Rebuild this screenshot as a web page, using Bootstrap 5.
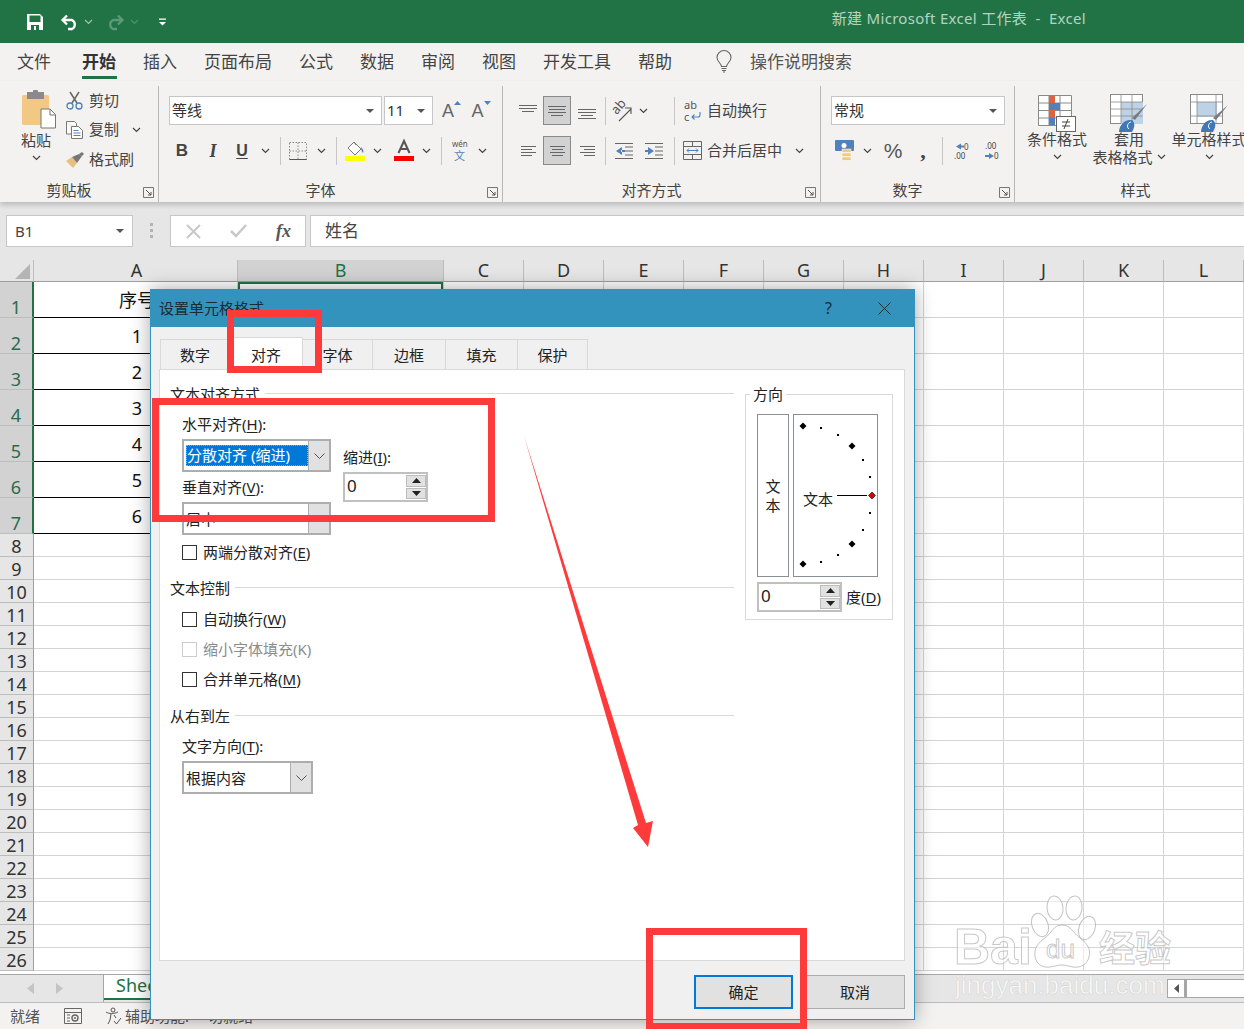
<!DOCTYPE html>
<html lang="zh-CN">
<head>
<meta charset="utf-8">
<title>新建 Microsoft Excel 工作表 - Excel</title>
<link rel="stylesheet" href="https://cdn.jsdelivr.net/npm/bootstrap@5.3.0/dist/css/bootstrap.min.css">
<style>
html,body{margin:0;padding:0}
body{width:1244px;height:1029px;overflow:hidden;position:relative;background:#fff;font-family:"Noto Sans","Noto Sans CJK SC",sans-serif;font-size:15px;line-height:20px;color:#222}
svg{display:block;flex:none;overflow:visible}
u{text-underline-offset:2px}
/* title bar */
.xl-title{height:43px;background:#217346;padding-left:27px;padding-right:158px}
.xl-title-text{color:#b4d3c2;font-size:15px;letter-spacing:.3px;padding-bottom:8px}
.qat{gap:0}
.qat-save{margin-right:18px}.qat-undo{margin-right:5px}.qat-c1{margin-right:13px}.qat-redo{margin-right:6px}.qat-c2{margin-right:20px}
/* ribbon tabs */
.xl-tabs{height:38px;background:#f3f2f1;padding-left:17px;gap:27px;color:#444;font-size:17px;line-height:38px}
.xl-tabs>.rt-file{margin-right:4px}
.rt-on{font-weight:700;position:relative;color:#333}
.rt-on::after{content:"";position:absolute;left:0;right:-1px;bottom:2px;height:3px;background:#217346}
.rt-bulb{margin-left:17px;margin-right:-9px;align-self:center}
.rt-search{color:#555}
/* ribbon */
.xl-ribbon{height:121px;background:#f3f2f1;box-shadow:0 3px 5px rgba(0,0,0,.18);position:relative;z-index:2;overflow:hidden;color:#444}
.rg{position:relative;flex:none;height:116px;margin-top:5px;padding-top:10px}
.rg::after{content:"";position:absolute;right:0;top:0;bottom:0;width:1px;background:#b9b7b5}
.rg-clip{width:159px}.rg-font{width:344px}.rg-align{width:318px}.rg-num{width:194px}.rg-style{width:242px}
.rg-style::after{display:none}
.rg-body{height:69px;padding-left:10px}
.rg-foot{position:absolute;left:0;right:1px;top:95px;display:flex;line-height:18px}
.rg-lab{flex:1;text-align:center;padding-left:0}
.rg-launch{width:20px;padding-top:6px;padding-left:5px}
.rows{display:flex;flex-direction:column;gap:11px}
.r-row{display:grid;height:29px;align-items:center;justify-items:center}
.cell-box{background:#fff;border:1px solid #c6c6c6;height:29px;display:flex;align-items:center;justify-content:space-between;padding:0 7px 0 2px;color:#333}
.cell-box span,.tl{padding-bottom:2px}
.caret{width:0;height:0;border-left:4px solid transparent;border-right:4px solid transparent;border-top:4px solid #555}
.vsep{width:1px;height:28px;background:#c8c6c4}
.f-row1{grid-template-columns:213px 2px 49px 30px 29px 20px;width:343px}
.f-row2{grid-template-columns:26px 36px 22px 24px 7px 28px 18px 13px 24px 20px 34px 10px 21px 16px 28px;width:327px}
.a-row1{grid-template-columns:30px 28px 32px 4px 30px 12px 22px 6px 30px 90px}
.a-row2{grid-template-columns:30px 28px 32px 4px 34px 26px 4px 6px 30px 75px 34px}
.n-row1{width:174px}
.n-row2{grid-template-columns:27px 18px 34px 26px 12px 26px 34px}
.a-on{width:28px;height:29px;background:#d2d2d2;border:1px solid #8a8a8a;display:flex;align-items:center;justify-content:center}
.tl{justify-self:start}
.b-b{font-family:"Liberation Sans",sans-serif;font-weight:700;font-size:17px;color:#444}
.b-i{font-family:"Liberation Serif",serif;font-style:italic;font-weight:700;font-size:18px;color:#444}
.b-u{font-family:"Liberation Sans",sans-serif;font-weight:700;font-size:16px;color:#444;text-decoration:underline;text-underline-offset:2px}
.b-pct{font-size:21px;color:#555;font-family:"Liberation Sans",sans-serif}
.b-com{font-size:22px;font-weight:700;color:#444;line-height:16px;font-family:"Liberation Serif",serif}
.a-grow{font-family:"Liberation Sans",sans-serif;font-size:18px;color:#666;font-weight:400}
/* clipboard */
.clip-wrap{display:flex;padding-left:0}
.clip-paste{width:58px;display:flex;flex-direction:column;align-items:center;padding-left:14px;margin-top:-6px}
.clip-paste>svg:first-child{margin-left:5px}
.clip-paste span{margin-top:2px;line-height:20px}
.clip-paste .chv{margin-top:5px}
.clip-list{display:flex;flex-direction:column;gap:8.5px;margin-left:8px;margin-top:-6px}
.clip-item{display:flex;align-items:center;height:21px;gap:6px}
.clip-item>span{padding-bottom:2px}
.clip-ico{width:17px;display:flex;justify-content:center}
.clip-ch{margin-left:7px}
/* styles */
.st-wrap{display:flex;margin-top:-2px}
.st-wrap.rg-body{padding-left:11px}
.st-col{display:flex;flex-direction:column;align-items:center;flex:none;line-height:18px}
.st-c1{width:62px}.st-c2{width:82px}.st-c3{width:78px}
.st-col>svg:first-child{margin-bottom:-2px}
.st-t{white-space:nowrap}
.st-ln2{display:flex;align-items:center;gap:4px;white-space:nowrap}
.st-col .chv{margin-top:6px}
/* formula */
.xl-formula{height:58px;background:#e6e6e6;padding:13px 0 0 6px}
.fx-box{height:32px;background:#fff;border:1px solid #c6c6c6;display:flex;align-items:center;color:#444}
.fx-name{width:127px;padding:0 8px;justify-content:space-between;font-size:15px}
.fx-dots{width:37px;display:flex;flex-direction:column;align-items:center;gap:3px}
.fx-dots i{width:3px;height:3px;background:#b3b3b3;display:block}
.fx-btns{width:136px;padding:0 14px 0 15px;justify-content:space-between}
.fx-input{margin-left:4px;flex:1;padding-left:14px;font-size:17px;border-right:0}
.fx-fx{font-family:"Liberation Serif",serif;font-style:italic;font-weight:700;font-size:18px;color:#555}
/* sheet */
.xl-sheet{height:714px;overflow:hidden;background:#fff}
.grid-tb{table-layout:fixed;width:1244px;border-collapse:separate;border-spacing:0;font-size:18px;color:#111}
.c-h{width:34px}.c-a{width:204px}.c-b{width:206px}.c-n{width:80px}
.grid-tb td,.grid-tb th{padding:0;border-right:1px solid #d4d4d4;border-bottom:1px solid #d4d4d4;font-weight:400;text-align:center;overflow:hidden;white-space:nowrap}
.grid-tb thead th{height:22px;line-height:21px;background:#e6e6e6;border-right:1px solid #bdbdbd;border-bottom:1px solid #9e9e9e;color:#333;vertical-align:middle}
.grid-tb thead th.col-on{background:#d2d2d2;color:#217346}
.grid-tb thead th.corner{position:relative}
.corner-tri{width:0;height:0;border-left:15px solid transparent;border-bottom:15px solid #b4b4b4;margin:2px 0 0 15px}
.grid-tb tbody th{background:#e6e6e6;border-right:1px solid #9e9e9e;border-bottom:1px solid #bdbdbd;line-height:20px;vertical-align:bottom;color:#333}
.grid-tb tbody tr.r-tall{height:36px}
.grid-tb tbody tr.r-sm{height:23px}
.grid-tb tbody tr.r-tall th{background:#d2d2d2;color:#2a6b4d;border-right:2px solid #217346}
.grid-tb tbody tr.r-tall td.bk{border-bottom:1px solid #000}
.grid-tb tbody tr.r-tall td.col1{padding-left:3px}
.grid-tb thead th.col1{padding-left:2px}
.grid-tb td.sel-cell{box-shadow:inset 0 0 0 2px #217346}
/* sheet tabs */
.xl-sbar{height:29px;background:#e6e6e6;border-top:1px solid #a6a6a6;border-bottom:1px solid #bdbdbd;position:relative}
.sb-nav{width:104px;padding-left:27px;gap:22px;border-right:1px solid #a6a6a6}
.sb-tab{width:120px;background:#fff;color:#217346;font-size:18px;padding-left:12px;line-height:21px;border-bottom:2px solid #217346;height:25px}
.sb-scroll{position:absolute;right:0;top:4px;width:77px;height:19px;display:flex;background:#fff;border:1px solid #a6a6a6;border-right:0}
.sb-arrow{width:19px;border-right:3px solid #a6a6a6;display:flex;align-items:center;justify-content:center}
/* status */
.xl-status{height:26px;background:#f3f2f1;padding-left:10px;color:#555;font-size:15px}
.st-gap1{margin-left:24px}.st-gap2{margin-left:23px;margin-right:3px}
/* dialog */
.xl-dialog{position:absolute;left:150px;top:289px;width:765px;height:731px;background:#f0f0f0;border:1px solid #3393bd;box-shadow:0 0 18px rgba(0,0,0,.35);z-index:5;display:flex;flex-direction:column}
.dlg-head{height:37px;background:#3393bd;padding:0 23px 0 8px;flex:none;font-size:15px;color:#1c2b33}
.dlg-head>span{padding-bottom:2px}
.dlg-q{margin-right:46px;font-size:16px;padding-bottom:2px}
.dlg-nav.nav{display:grid;grid-template-columns:70px 73px 70px 73px 72px 70px;width:428px;margin:12px 0 0 9px;padding:0;border:0;height:30px;flex:none}
.dlg-nav .dlg-tab{display:block;border:1px solid #d9d9d9;border-left:0;border-bottom:0;background:#f0f0f0;color:#222;text-align:center;line-height:28px;padding:1px 0 0;font-size:15px;height:30px;text-decoration:none}
.dlg-nav .dlg-tab.first{border-left:1px solid #d9d9d9}
.dlg-nav .dlg-tab.active{background:#fff;margin-top:-2px;height:33px;position:relative;z-index:2;padding-top:3px}
.dlg-panel{width:746px;height:592px;margin-left:8px;background:#fff;border:1px solid #d9d9d9;flex:none;padding:14px 0 0 0;display:flex}
.dp-left{width:574px;flex:none;padding-left:10px}
.dp-head{display:flex;align-items:center;gap:5px;height:20px}
.dp-head>span{padding-bottom:1px}
.dp-head i{flex:1;height:1px;background:#d9d9d9;display:block;margin-top:-2px}
.dp-ind{padding-left:12px}
.dp-head.h-mid{margin-top:16px}
.dp-head.h-b{margin-top:17px}
.lb-h{margin-top:10px;height:20px}
.sel-box{height:33px;border:2px solid #adadad;border-right-width:2px;background:#fff;display:flex;margin-top:5px;width:149px;padding-left:0;overflow:hidden}
.sel-box.sb-dir{width:131px;margin-top:5px}
.sel-txt{flex:1;display:flex;align-items:center;padding-left:2px;min-width:0;white-space:nowrap}
.sel-pick{background:#0078d7;color:#fff;height:21px;line-height:20px;outline:1px dotted #e09a40;outline-offset:-1px;width:124px;padding-left:1px;white-space:nowrap;overflow:hidden}
.sel-btn{width:21px;flex:none;background:#e1e1e1;border-left:1px solid #adadad;display:flex;align-items:center;justify-content:center}
.lb-v{margin-top:5px;height:20px}
.two-col{display:flex}
.tc-l{width:149px;flex:none;margin-right:12px}
.tc-r{padding-top:43px}
.spin{width:85px;height:30px;border:2px solid #c0c0c0;background:#fff;display:flex;margin-top:5px;font-size:15px}
.spin-val{flex:1;padding-left:2px;line-height:24px;font-size:17px}
.spin-btns{width:20px;display:flex;flex-direction:column;margin:1px 0 1px 1px;gap:1px}
.spin-btns i{flex:1;background:#e1e1e1;border:1px solid #bdbdbd;display:flex;align-items:center;justify-content:center}
.chk-row{display:flex;align-items:center;gap:6px;height:20px;margin-top:10px;white-space:nowrap}
.chk-row.c-first{margin-top:7px}
.chk-row.c-sec{margin-top:11px}
.chk-row .form-check-input{width:15px;height:15px;margin:0;border:1px solid #333;border-radius:0;flex:none;opacity:1}
.chk-row .form-check-input:disabled{border-color:#ccc;opacity:1}
.chk-off{color:#8c8c8c}
.lb-dir{margin-top:10px;height:20px}
.dp-right{width:148px;height:226px;border:1px solid #d9d9d9;margin:10px 0 0 11px;position:relative;padding:19px 0 0 11px;flex:none}
.dp-leg{position:absolute;left:4px;top:-11px;background:#fff;padding:0 3px;line-height:20px}
.or-boxes{display:flex;gap:4px}
.or-vert{width:32px;height:163px;border:1px solid #8a8f94;display:flex;flex-direction:column;align-items:center;justify-content:center;line-height:19px}
.or-dial{width:85px;height:163px;border:1px solid #8a8f94}
.or-foot{display:flex;align-items:center;gap:4px;margin-top:5px}
.or-foot .spin{margin:0}
.or-foot>span{margin-top:0}
.dlg-foot{gap:12px;padding:14px 9px 0 0;flex:none}
.dlg-foot .btn{width:100px;height:34px;padding:0;background:#e1e1e1;border:1px solid #adadad;border-radius:0;color:#222;font-size:15px;line-height:30px}
.dlg-foot .btn.dlg-ok{width:99px;border:2px solid #0078d7}
/* annotations */
.mark-box{position:absolute;border:7px solid #fe3a3a;z-index:6}
.mb-1{left:227px;top:310px;width:95px;height:63px}
.mb-2{left:152px;top:398px;width:343px;height:124px}
.mb-3{left:646px;top:928px;width:161px;height:102px}
.mark-arrow{position:absolute;left:0;top:0;z-index:7;pointer-events:none}
.wm-paw{position:absolute;left:0;top:0;z-index:8;pointer-events:none}
.wm-t{fill:rgba(255,255,255,.55);stroke:rgba(170,170,170,.65);stroke-width:1;font-family:"Liberation Sans",sans-serif}
.wm-cn{font-family:"Noto Sans CJK SC",sans-serif;font-weight:700;font-size:36px}
.wm-sm{fill:rgba(255,255,255,.75);stroke:rgba(190,190,190,.5);stroke-width:.6;font-size:26px}
</style>
</head>
<body>
<svg width="0" height="0" class="position-absolute">
<symbol id="chv" viewBox="0 0 9 6"><path d="M1 1l3.5 3.5L8 1" fill="none" stroke="#444" stroke-width="1.2"/></symbol>
<symbol id="launch" viewBox="0 0 11 11"><path d="M.5 10.5V.5h10v10z" fill="none" stroke="#777"/><path d="M3 3l5 5M8 5v3H5" fill="none" stroke="#555"/></symbol>
</svg>

<div class="xl-title d-flex align-items-center justify-content-between">
  <div class="d-flex align-items-center qat">
    <svg class="qat-save" width="16" height="16" viewBox="0 0 16 16"><path d="M0 0h13l3 3v13H0z" fill="#fff"/><rect x="2.500" y="1.500" width="11" height="6.500" fill="#217346"/><rect x="4" y="11" width="8" height="5" fill="#217346"/><rect x="7" y="12" width="2" height="4" fill="#fff"/></svg>
    <svg class="qat-undo" width="18" height="16" viewBox="0 0 18 16"><path d="M2 6h9a5 5 0 0 1 0 9H7M6 1.500L1.500 6 6 10.500" fill="none" stroke="#fff" stroke-width="2.300"/></svg>
    <svg class="qat-c1" width="9" height="6" viewBox="0 0 9 6"><path d="M1 1l3.500 3.500L8 1" fill="none" stroke="#9ec5ae" stroke-width="1.200"/></svg>
    <svg class="qat-redo" width="18" height="16" viewBox="0 0 18 16"><path d="M16 6H7a5 5 0 0 0 0 9h4M12 1.500L16.500 6 12 10.500" fill="none" stroke="#5a9a78" stroke-width="2.300"/></svg>
    <svg class="qat-c2" width="9" height="6" viewBox="0 0 9 6"><path d="M1 1l3.500 3.500L8 1" fill="none" stroke="#4f9270" stroke-width="1.200"/></svg>
    <svg width="7" height="8" viewBox="0 0 7 8"><path d="M0 .5h7v1.200H0zM0 4h7L3.500 7.500z" fill="#fff"/></svg>
  </div>
  <div class="xl-title-text">新建 Microsoft Excel 工作表&nbsp; -&nbsp; Excel</div>
</div>

<div class="xl-tabs d-flex">
  <span class="rt-file">文件</span><span class="rt-on">开始</span><span>插入</span><span>页面布局</span><span>公式</span><span>数据</span><span>审阅</span><span>视图</span><span>开发工具</span><span>帮助</span>
  <svg class="rt-bulb" width="16" height="22" viewBox="0 0 16 22"><path d="M5.500 15.500C5 12 1 10.500 1 6.500a7 7 0 0 1 14 0c0 4-4 5.500-4.500 9z" fill="none" stroke="#666" stroke-width="1.100"/><path d="M5.500 17.500h5M6 19.500h4M7 21h2" stroke="#666"/></svg>
  <span class="rt-search">操作说明搜索</span>
</div>

<div class="xl-ribbon d-flex">
  <!-- clipboard -->
  <div class="rg rg-clip">
    <div class="clip-wrap">
      <div class="clip-paste">
        <svg width="36" height="38" viewBox="0 0 36 38"><rect x="1" y="5" width="27" height="30" rx="1.500" fill="#f1c985"/><rect x="6" y="2" width="17" height="7" fill="#8a8a8a"/><rect x="12" y="0" width="5" height="4" rx="1" fill="#8a8a8a"/><path d="M20 19h9l5.500 5.500V38H20z" fill="#fff" stroke="#777"/><path d="M29 19v6h5.500" fill="none" stroke="#777"/></svg>
        <span>粘贴</span>
        <svg class="chv" width="9" height="6"><use href="#chv"/></svg>
      </div>
      <div class="clip-list">
        <div class="clip-item"><div class="clip-ico"><svg width="17" height="19" viewBox="0 0 17 19"><path d="M4 1l7 11M13 1L6 12" fill="none" stroke="#666" stroke-width="1.500"/><circle cx="4" cy="15" r="3" fill="none" stroke="#4f81bd" stroke-width="1.300"/><circle cx="13" cy="15" r="3" fill="none" stroke="#4f81bd" stroke-width="1.300"/></svg></div><span>剪切</span></div>
        <div class="clip-item"><div class="clip-ico"><svg width="17" height="18" viewBox="0 0 17 18"><path d="M.5.500h8l2 2V5M.5.500V13H5" fill="#fff" stroke="#777"/><path d="M5.500 5.500h7l4 4v8h-11z" fill="#fff" stroke="#777"/><path d="M7.500 9.500h5M7.500 12h7M7.500 14.500h7" stroke="#4f81bd"/></svg></div><span>复制</span><svg class="clip-ch" width="9" height="6"><use href="#chv"/></svg></div>
        <div class="clip-item"><div class="clip-ico"><svg width="18" height="16" viewBox="0 0 18 16"><path d="M0 9l6-4 5 6-4 5z" fill="#e8bf7e"/><path d="M6 5l7-3 3 2-5 7z" fill="#777"/><path d="M13 2l3-2 2 2-2 2z" fill="#777"/></svg></div><span>格式刷</span></div>
      </div>
    </div>
    <div class="rg-foot"><span class="rg-lab">剪贴板</span><span class="rg-launch"><svg width="11" height="11"><use href="#launch"/></svg></span></div>
  </div>
  <!-- font -->
  <div class="rg rg-font">
    <div class="rg-body rows">
      <div class="r-row f-row1">
        <div class="cell-box w-100"><span>等线</span><i class="caret"></i></div><span></span>
        <div class="cell-box w-100"><span>11</span><i class="caret"></i></div>
        <span class="a-grow position-relative">A<svg class="position-absolute top-0 start-100" width="7" height="4" viewBox="0 0 7 4"><path d="M0 4l3.500-4L7 4z" fill="#4f81bd"/></svg></span>
        <span class="a-grow position-relative">A<svg class="position-absolute top-0 start-100" width="7" height="4" viewBox="0 0 7 4"><path d="M0 0l3.500 4L7 0z" fill="#4f81bd"/></svg></span>
        <span></span>
      </div>
      <div class="r-row f-row2">
        <span class="b-b">B</span><span class="b-i">I</span><span class="b-u">U</span><svg width="9" height="6"><use href="#chv"/></svg>
        <i class="vsep"></i>
        <svg width="18" height="18" viewBox="0 0 18 18"><path d="M.5.500h17v17H.5zM.5 9h17M9 .500v17" fill="none" stroke="#8a8a8a" stroke-dasharray="1.500 1.500"/><path d="M.5 17.500h17" stroke="#555"/></svg><svg width="9" height="6"><use href="#chv"/></svg>
        <i class="vsep"></i>
        <svg width="20" height="20" viewBox="0 0 20 20"><path d="M9 1l7 7-6 6-7-7z" fill="#fff" stroke="#777"/><path d="M6 4l3-3 2 3" fill="none" stroke="#777"/><path d="M16 6c2 2 3 4 2 6-1-1-2-3-2-6z" fill="#4f81bd"/><rect y="15" width="20" height="5" fill="#ffff00"/></svg><svg width="9" height="6"><use href="#chv"/></svg>
        <svg width="20" height="21" viewBox="0 0 20 21"><path d="M4.500 13L10 1l5.500 12M6.500 9h7" fill="none" stroke="#555" stroke-width="2"/><rect y="16" width="20" height="5" fill="#ff0000"/></svg><svg width="9" height="6"><use href="#chv"/></svg>
        <i class="vsep"></i>
        <svg width="18" height="22" viewBox="0 0 18 22"><text x="1" y="7" font-size="8" fill="#555" font-family="Noto Sans">wén</text><text x="3" y="20" font-size="11" fill="#4f81bd" font-family="Noto Sans CJK SC">文</text></svg><svg width="9" height="6"><use href="#chv"/></svg>
      </div>
    </div>
    <div class="rg-foot"><span class="rg-lab">字体</span><span class="rg-launch"><svg width="11" height="11"><use href="#launch"/></svg></span></div>
  </div>
  <!-- align -->
  <div class="rg rg-align">
    <div class="rg-body rows">
      <div class="r-row a-row1">
        <svg width="18" height="18" viewBox="0 0 18 18"><path d="M0 3.500h18M0 6.500h18M3 9.500h12" stroke="#666"/></svg>
        <div class="a-on"><svg width="18" height="12" viewBox="0 0 18 12"><path d="M0 1.500h18M1 4.500h16M0 7.500h18M3 10.500h12" stroke="#666"/></svg></div>
        <svg width="18" height="18" viewBox="0 0 18 18"><path d="M0 7.500h18M0 10.500h18M3 13.500h12M0 16.500h18" stroke="#666"/></svg>
        <i class="vsep"></i>
        <svg width="22" height="24" viewBox="0 0 22 24"><text x="1" y="12" transform="rotate(-50 8 9)" font-size="13" fill="#555" font-family="Noto Sans">ab</text><path d="M8 22L20 10M14 9h6v6" fill="none" stroke="#555" stroke-width="1.100"/></svg>
        <svg width="9" height="6"><use href="#chv"/></svg><span></span>
        <i class="vsep"></i>
        <svg width="17" height="22" viewBox="0 0 17 22"><text x="0" y="9" font-size="11" fill="#555" font-family="Noto Sans">ab</text><text x="0" y="21" font-size="11" fill="#555" font-family="Noto Sans">c</text><path d="M16 12v3a2 2 0 0 1-2 2H8M10.500 14.500L8 17l2.500 2.500" fill="none" stroke="#4f81bd" stroke-width="1.100"/></svg>
        <span class="tl text-nowrap">自动换行</span>
      </div>
      <div class="r-row a-row2">
        <svg width="15" height="12" viewBox="0 0 15 12"><path d="M0 1.500h15M0 4.500h11M0 7.500h15M0 10.500h11" stroke="#666"/></svg>
        <div class="a-on"><svg width="15" height="12" viewBox="0 0 15 12"><path d="M0 1.500h15M2 4.500h11M0 7.500h15M2 10.500h11" stroke="#666"/></svg></div>
        <svg width="15" height="12" viewBox="0 0 15 12"><path d="M0 1.500h15M4 4.500h11M0 7.500h15M4 10.500h11" stroke="#666"/></svg>
        <i class="vsep"></i>
        <svg width="18" height="16" viewBox="0 0 18 16"><path d="M0 .5h18M10 4h8M10 8h8M10 12h8M0 15.500h18" stroke="#666"/><path d="M7 4L1 8l6 4zM6 7h4v2H6z" fill="#4f81bd"/></svg>
        <svg width="18" height="16" viewBox="0 0 18 16"><path d="M0 .5h18M10 4h8M10 8h8M10 12h8M0 15.500h18" stroke="#666"/><path d="M3 4l6 4-6 4zM0 7h4v2H0z" fill="#4f81bd"/></svg>
        <span></span>
        <i class="vsep"></i>
        <svg width="19" height="19" viewBox="0 0 19 19"><path d="M.5.500h18v18H.5zM.5 5.500h18M.5 13.500h18M9.500.500v5M9.500 13.500v5" fill="none" stroke="#666"/><path d="M4 9.500h11M6 7.500l-2 2 2 2M13 7.500l2 2-2 2" fill="none" stroke="#4f81bd"/></svg>
        <span class="tl text-nowrap">合并后居中</span>
        <svg width="9" height="6"><use href="#chv"/></svg>
      </div>
    </div>
    <div class="rg-foot"><span class="rg-lab">对齐方式</span><span class="rg-launch"><svg width="11" height="11"><use href="#launch"/></svg></span></div>
  </div>
  <!-- number -->
  <div class="rg rg-num">
    <div class="rg-body rows">
      <div class="r-row n-row1"><div class="cell-box w-100"><span>常规</span><i class="caret"></i></div></div>
      <div class="r-row n-row2">
        <svg width="20" height="21" viewBox="0 0 20 21"><rect x="0" y="0" width="19" height="11" rx="1" fill="#4f81bd"/><circle cx="9" cy="5.500" r="2.500" fill="#fff"/><g fill="#f1c985" stroke="#fff" stroke-width=".5"><rect x="7" y="9" width="9" height="3.500"/><rect x="7" y="13" width="9" height="3.500"/><rect x="7" y="17" width="9" height="3.500"/></g></svg>
        <svg width="9" height="6"><use href="#chv"/></svg>
        <span class="b-pct">%</span>
        <span class="b-com">,</span>
        <i class="vsep"></i>
        <svg width="16" height="18" viewBox="0 0 16 18"><path d="M8 1.500L3 4.500l5 3V5.500h3v-2H8z" fill="#4f81bd"/><text x="11" y="8" font-size="8" fill="#444" font-family="Noto Sans">0</text><text x="1" y="17" font-size="8" fill="#444" font-family="Noto Sans">.00</text></svg>
        <svg width="16" height="18" viewBox="0 0 16 18"><text x="2" y="7" font-size="8" fill="#444" font-family="Noto Sans">.00</text><path d="M6 11l5 3-5 3v-2H2v-2h4z" fill="#4f81bd"/><text x="11" y="17" font-size="8" fill="#444" font-family="Noto Sans">0</text></svg>
      </div>
    </div>
    <div class="rg-foot"><span class="rg-lab">数字</span><span class="rg-launch"><svg width="11" height="11"><use href="#launch"/></svg></span></div>
  </div>
  <!-- styles -->
  <div class="rg rg-style">
    <div class="st-wrap rg-body">
      <div class="st-col st-c1">
        <svg width="38" height="38" viewBox="0 0 38 38"><path d="M.5 1.500h33v30H.5zM.5 9h33M.5 16.500h33M.5 24h33M11 1.500v30M22 1.500v30" fill="#fff" stroke="#8a8a8a"/><rect x="11" y="2" width="6" height="7" fill="#e0623f"/><rect x="11" y="9" width="11" height="7" fill="#4f81bd"/><rect x="11" y="16" width="6" height="8" fill="#e0623f"/><rect x="11" y="24" width="6" height="7" fill="#4f81bd"/><rect x="18.500" y="22.500" width="19" height="15" fill="#fff" stroke="#666"/><path d="M24 28h8M24 32h8M30 25l-4 10" stroke="#444"/></svg>
        <span class="st-t">条件格式</span>
        <svg class="chv" width="9" height="6"><use href="#chv"/></svg>
      </div>
      <div class="st-col st-c2">
        <svg width="38" height="38" viewBox="0 0 38 38"><rect x=".5" y=".5" width="32" height="29" fill="#fff" stroke="#8a8a8a"/><rect x="11" y="8" width="22" height="22" fill="#bdd2e6"/><path d="M.5 8h32M.5 15h32M.5 22h32M11 .500v29M22 .500v29" fill="none" stroke="#8a8a8a" stroke-width=".8"/><path d="M37 10l-12 16-3-2z" fill="#7a7a7a"/><path d="M9 38c0-6 5-13 13-12 4 4 2 8 0 12z" fill="#3f78b5"/><path d="M19 35c-3-2-1-7 2-7" stroke="#fff" fill="none"/></svg>
        <span class="st-t">套用</span>
        <span class="st-ln2">表格格式<svg width="9" height="6"><use href="#chv"/></svg></span>
      </div>
      <div class="st-col st-c3">
        <svg width="39" height="38" viewBox="0 0 39 38"><rect x=".5" y=".5" width="32" height="29" fill="#fff" stroke="#8a8a8a"/><rect x="7" y="8" width="20" height="15" fill="#bdd2e6"/><path d="M.5 8h32M.5 22h32M7 .500v29M26 .500v29" fill="none" stroke="#8a8a8a" stroke-width=".8"/><path d="M38 11l-12 15-3-2z" fill="#7a7a7a"/><path d="M11 38c0-6 5-13 12-12 4 4 2 8 0 12z" fill="#3f78b5"/><path d="M20 35c-3-2-1-7 2-7" stroke="#fff" fill="none"/></svg>
        <span class="st-t">单元格样式</span>
        <svg class="chv" width="9" height="6"><use href="#chv"/></svg>
      </div>
    </div>
    <div class="rg-foot"><span class="rg-lab">样式</span></div>
  </div>
</div>

<div class="xl-formula d-flex align-items-start">
  <div class="fx-box fx-name"><span>B1</span><i class="caret"></i></div>
  <div class="fx-dots h-100 pt-2"><i></i><i></i><i></i></div>
  <div class="fx-box fx-btns">
    <svg width="15" height="15" viewBox="0 0 15 15"><path d="M1 1l13 13M14 1L1 14" stroke="#c8c8c8" stroke-width="2"/></svg>
    <svg width="17" height="14" viewBox="0 0 17 14"><path d="M1 7l5 5L16 1" fill="none" stroke="#c8c8c8" stroke-width="2.500"/></svg>
    <span class="fx-fx">fx</span>
  </div>
  <div class="fx-box fx-input">姓名</div>
</div>

<div class="xl-sheet">
<table class="grid-tb">
<colgroup><col class="c-h"><col class="c-a"><col class="c-b"><col class="c-n"><col class="c-n"><col class="c-n"><col class="c-n"><col class="c-n"><col class="c-n"><col class="c-n"><col class="c-n"><col class="c-n"><col class="c-n"></colgroup>
<thead><tr><th class="corner"><div class="corner-tri"></div></th><th class="col1">A</th><th class="col-on">B</th><th>C</th><th>D</th><th>E</th><th>F</th><th>G</th><th>H</th><th>I</th><th>J</th><th>K</th><th>L</th></tr></thead>
<tbody>
<tr class="r-tall"><th>1</th><td class="bk col1">序号</td><td class="bk sel-cell"></td><td></td><td></td><td></td><td></td><td></td><td></td><td></td><td></td><td></td><td></td></tr>
<tr class="r-tall"><th>2</th><td class="bk col1">1</td><td class="bk"></td><td></td><td></td><td></td><td></td><td></td><td></td><td></td><td></td><td></td><td></td></tr>
<tr class="r-tall"><th>3</th><td class="bk col1">2</td><td class="bk"></td><td></td><td></td><td></td><td></td><td></td><td></td><td></td><td></td><td></td><td></td></tr>
<tr class="r-tall"><th>4</th><td class="bk col1">3</td><td class="bk"></td><td></td><td></td><td></td><td></td><td></td><td></td><td></td><td></td><td></td><td></td></tr>
<tr class="r-tall"><th>5</th><td class="bk col1">4</td><td class="bk"></td><td></td><td></td><td></td><td></td><td></td><td></td><td></td><td></td><td></td><td></td></tr>
<tr class="r-tall"><th>6</th><td class="bk col1">5</td><td class="bk"></td><td></td><td></td><td></td><td></td><td></td><td></td><td></td><td></td><td></td><td></td></tr>
<tr class="r-tall"><th>7</th><td class="bk col1">6</td><td class="bk"></td><td></td><td></td><td></td><td></td><td></td><td></td><td></td><td></td><td></td><td></td></tr>
<tr class="r-sm"><th>8</th><td></td><td></td><td></td><td></td><td></td><td></td><td></td><td></td><td></td><td></td><td></td><td></td></tr>
<tr class="r-sm"><th>9</th><td></td><td></td><td></td><td></td><td></td><td></td><td></td><td></td><td></td><td></td><td></td><td></td></tr>
<tr class="r-sm"><th>10</th><td></td><td></td><td></td><td></td><td></td><td></td><td></td><td></td><td></td><td></td><td></td><td></td></tr>
<tr class="r-sm"><th>11</th><td></td><td></td><td></td><td></td><td></td><td></td><td></td><td></td><td></td><td></td><td></td><td></td></tr>
<tr class="r-sm"><th>12</th><td></td><td></td><td></td><td></td><td></td><td></td><td></td><td></td><td></td><td></td><td></td><td></td></tr>
<tr class="r-sm"><th>13</th><td></td><td></td><td></td><td></td><td></td><td></td><td></td><td></td><td></td><td></td><td></td><td></td></tr>
<tr class="r-sm"><th>14</th><td></td><td></td><td></td><td></td><td></td><td></td><td></td><td></td><td></td><td></td><td></td><td></td></tr>
<tr class="r-sm"><th>15</th><td></td><td></td><td></td><td></td><td></td><td></td><td></td><td></td><td></td><td></td><td></td><td></td></tr>
<tr class="r-sm"><th>16</th><td></td><td></td><td></td><td></td><td></td><td></td><td></td><td></td><td></td><td></td><td></td><td></td></tr>
<tr class="r-sm"><th>17</th><td></td><td></td><td></td><td></td><td></td><td></td><td></td><td></td><td></td><td></td><td></td><td></td></tr>
<tr class="r-sm"><th>18</th><td></td><td></td><td></td><td></td><td></td><td></td><td></td><td></td><td></td><td></td><td></td><td></td></tr>
<tr class="r-sm"><th>19</th><td></td><td></td><td></td><td></td><td></td><td></td><td></td><td></td><td></td><td></td><td></td><td></td></tr>
<tr class="r-sm"><th>20</th><td></td><td></td><td></td><td></td><td></td><td></td><td></td><td></td><td></td><td></td><td></td><td></td></tr>
<tr class="r-sm"><th>21</th><td></td><td></td><td></td><td></td><td></td><td></td><td></td><td></td><td></td><td></td><td></td><td></td></tr>
<tr class="r-sm"><th>22</th><td></td><td></td><td></td><td></td><td></td><td></td><td></td><td></td><td></td><td></td><td></td><td></td></tr>
<tr class="r-sm"><th>23</th><td></td><td></td><td></td><td></td><td></td><td></td><td></td><td></td><td></td><td></td><td></td><td></td></tr>
<tr class="r-sm"><th>24</th><td></td><td></td><td></td><td></td><td></td><td></td><td></td><td></td><td></td><td></td><td></td><td></td></tr>
<tr class="r-sm"><th>25</th><td></td><td></td><td></td><td></td><td></td><td></td><td></td><td></td><td></td><td></td><td></td><td></td></tr>
<tr class="r-sm"><th>26</th><td></td><td></td><td></td><td></td><td></td><td></td><td></td><td></td><td></td><td></td><td></td><td></td></tr>
</tbody>
</table>
</div>

<div class="xl-sbar d-flex">
  <div class="sb-nav d-flex align-items-center">
    <svg width="7" height="11" viewBox="0 0 7 11"><path d="M7 0v11L0 5.500z" fill="#c4c4c4"/></svg>
    <svg width="7" height="11" viewBox="0 0 7 11"><path d="M0 0v11l7-5.500z" fill="#c4c4c4"/></svg>
  </div>
  <div class="sb-tab">Sheet1</div>
  <div class="sb-scroll"><div class="sb-arrow"><svg width="5" height="9" viewBox="0 0 5 9"><path d="M5 0v9L0 4.500z" fill="#555"/></svg></div></div>
</div>

<div class="xl-status d-flex align-items-center">
  <span>就绪</span>
  <svg class="st-gap1" width="18" height="16" viewBox="0 0 18 16"><path d="M.5.500h17v15H.5zM.5 4.500h17M3 7h3M3 10h3M3 13h3" fill="none" stroke="#666"/><circle cx="11" cy="10" r="3" fill="none" stroke="#666" stroke-width="1.400"/><circle cx="11" cy="10" r="1" fill="#666"/></svg>
  <svg class="st-gap2" width="17" height="18" viewBox="0 0 17 18"><circle cx="8" cy="3" r="2" fill="none" stroke="#555"/><path d="M1 5c3 2 8 2 12 0M6 7l-1 6-2 4M9 8l2 3M9 14l2.500 3L16 11" fill="none" stroke="#555"/></svg>
  <span>辅助功能: 一切就绪</span>
</div>

<div class="xl-dialog">
  <div class="dlg-head d-flex align-items-center justify-content-between">
    <span>设置单元格格式</span>
    <div class="d-flex align-items-center"><span class="dlg-q">?</span><svg width="13" height="13" viewBox="0 0 13 13"><path d="M.5.500l12 12M12.500.500l-12 12" stroke="#1c2b33"/></svg></div>
  </div>
  <nav class="nav dlg-nav">
    <a class="dlg-tab first" href="#">数字</a>
    <a class="dlg-tab active" href="#">对齐</a>
    <a class="dlg-tab" href="#">字体</a>
    <a class="dlg-tab" href="#">边框</a>
    <a class="dlg-tab" href="#">填充</a>
    <a class="dlg-tab" href="#">保护</a>
  </nav>
  <div class="dlg-panel">
    <div class="dp-left">
      <div class="dp-head"><span>文本对齐方式</span><i></i></div>
      <div class="dp-ind">
        <div class="two-col">
          <div class="tc-l">
            <div class="lb-h text-nowrap">水平对齐(<u>H</u>):</div>
            <div class="sel-box"><div class="sel-txt"><div class="sel-pick">分散对齐 (缩进)</div></div><div class="sel-btn"><svg width="11" height="6" viewBox="0 0 11 6"><path d="M.5.500l5 5 5-5" fill="none" stroke="#555"/></svg></div></div>
            <div class="lb-v text-nowrap">垂直对齐(<u>V</u>):</div>
            <div class="sel-box"><div class="sel-txt">居中</div><div class="sel-btn"></div></div>
          </div>
          <div class="tc-r">
            <div class="text-nowrap">缩进(<u>I</u>):</div>
            <div class="spin"><span class="spin-val">0</span><div class="spin-btns"><i><svg width="9" height="5" viewBox="0 0 9 5"><path d="M0 5l4.500-5L9 5z" fill="#222"/></svg></i><i><svg width="9" height="5" viewBox="0 0 9 5"><path d="M0 0l4.500 5L9 0z" fill="#222"/></svg></i></div></div>
          </div>
        </div>
        <div class="chk-row c-first"><input class="form-check-input" type="checkbox"><span>两端分散对齐(<u>E</u>)</span></div>
      </div>
      <div class="dp-head h-mid"><span>文本控制</span><i></i></div>
      <div class="dp-ind">
        <div class="chk-row c-sec"><input class="form-check-input" type="checkbox"><span>自动换行(<u>W</u>)</span></div>
        <div class="chk-row chk-off"><input class="form-check-input" type="checkbox" disabled><span>缩小字体填充(K)</span></div>
        <div class="chk-row"><input class="form-check-input" type="checkbox"><span>合并单元格(<u>M</u>)</span></div>
      </div>
      <div class="dp-head h-b"><span>从右到左</span><i></i></div>
      <div class="dp-ind">
        <div class="lb-dir text-nowrap">文字方向(<u>T</u>):</div>
        <div class="sel-box sb-dir"><div class="sel-txt">根据内容</div><div class="sel-btn"><svg width="11" height="6" viewBox="0 0 11 6"><path d="M.5.500l5 5 5-5" fill="none" stroke="#555"/></svg></div></div>
      </div>
    </div>
    <div class="dp-right">
      <span class="dp-leg">方向</span>
      <div class="or-boxes">
        <div class="or-vert"><span>文</span><span>本</span></div>
        <div class="or-dial">
          <svg width="83" height="161" viewBox="1 1 83 161">
            <g fill="#000"><path d="M10 8.500l3.500 3.500-3.500 3.500L6.500 12zM59 28.500l3.500 3.500-3.500 3.500-3.500-3.500zM59 126.500l3.500 3.500-3.500 3.500-3.500-3.500zM10 146.500l3.500 3.500-3.500 3.500-3.500-3.500z"/>
            <rect x="27" y="13" width="2" height="2"/><rect x="44" y="20" width="2" height="2"/><rect x="69" y="45" width="2" height="2"/><rect x="76" y="62" width="2" height="2"/><rect x="76" y="98" width="2" height="2"/><rect x="69" y="115" width="2" height="2"/><rect x="44" y="140" width="2" height="2"/><rect x="27" y="147" width="2" height="2"/></g>
            <path d="M44 81.500h30" stroke="#000"/><path d="M79 78l3.500 3.500L79 85l-3.500-3.500z" fill="#e00000" stroke="#000" stroke-width=".6"/>
            <text x="10" y="91" font-size="15" fill="#222" font-family="Noto Sans CJK SC">文本</text>
          </svg>
        </div>
      </div>
      <div class="or-foot">
        <div class="spin"><span class="spin-val">0</span><div class="spin-btns"><i><svg width="9" height="5" viewBox="0 0 9 5"><path d="M0 5l4.500-5L9 5z" fill="#222"/></svg></i><i><svg width="9" height="5" viewBox="0 0 9 5"><path d="M0 0l4.500 5L9 0z" fill="#222"/></svg></i></div></div>
        <span class="text-nowrap">度(<u>D</u>)</span>
      </div>
    </div>
  </div>
  <div class="dlg-foot d-flex justify-content-end">
    <button class="btn dlg-ok" type="button">确定</button>
    <button class="btn" type="button">取消</button>
  </div>
</div>

<div class="mark-box mb-1"></div>
<div class="mark-box mb-2"></div>
<div class="mark-box mb-3"></div>
<svg class="mark-arrow" width="1244" height="1029" viewBox="0 0 1244 1029"><polygon points="524,436 646,823 653,821 648,847 633,828 638,825" fill="#fe3a3a"/></svg>

<svg class="wm-paw" width="1244" height="1029" viewBox="0 0 1244 1029">
  <g fill="rgba(255,255,255,.55)" stroke="rgba(170,170,170,.7)">
    <ellipse cx="1055" cy="908" rx="8" ry="12" transform="rotate(-6 1055 908)"/>
    <ellipse cx="1074" cy="908" rx="8" ry="12" transform="rotate(6 1074 908)"/>
    <ellipse cx="1040" cy="925" rx="8" ry="12" transform="rotate(-20 1040 925)"/>
    <ellipse cx="1087" cy="928" rx="8" ry="12" transform="rotate(20 1087 928)"/>
    <path d="M1062 925c9 0 11 8 18 13 8 6 11 12 9 19-2 8-9 11-16 10-5-1-8-2-11-2s-7 1-12 2c-8 1-14-3-15-11s3-13 10-18c7-5 8-13 17-13z"/>
  </g>
  <text class="wm-t" x="954" y="964" font-size="50" font-weight="700">Bai</text>
  <text class="wm-t" x="1046" y="958" font-size="26">du</text>
  <text class="wm-t wm-cn" x="1099" y="962">经验</text>
  <text class="wm-t wm-sm" x="955" y="994">jingyan.baidu.com</text>
</svg>

<script src="https://cdn.jsdelivr.net/npm/bootstrap@5.3.0/dist/js/bootstrap.bundle.min.js"></script>
</body>
</html>
